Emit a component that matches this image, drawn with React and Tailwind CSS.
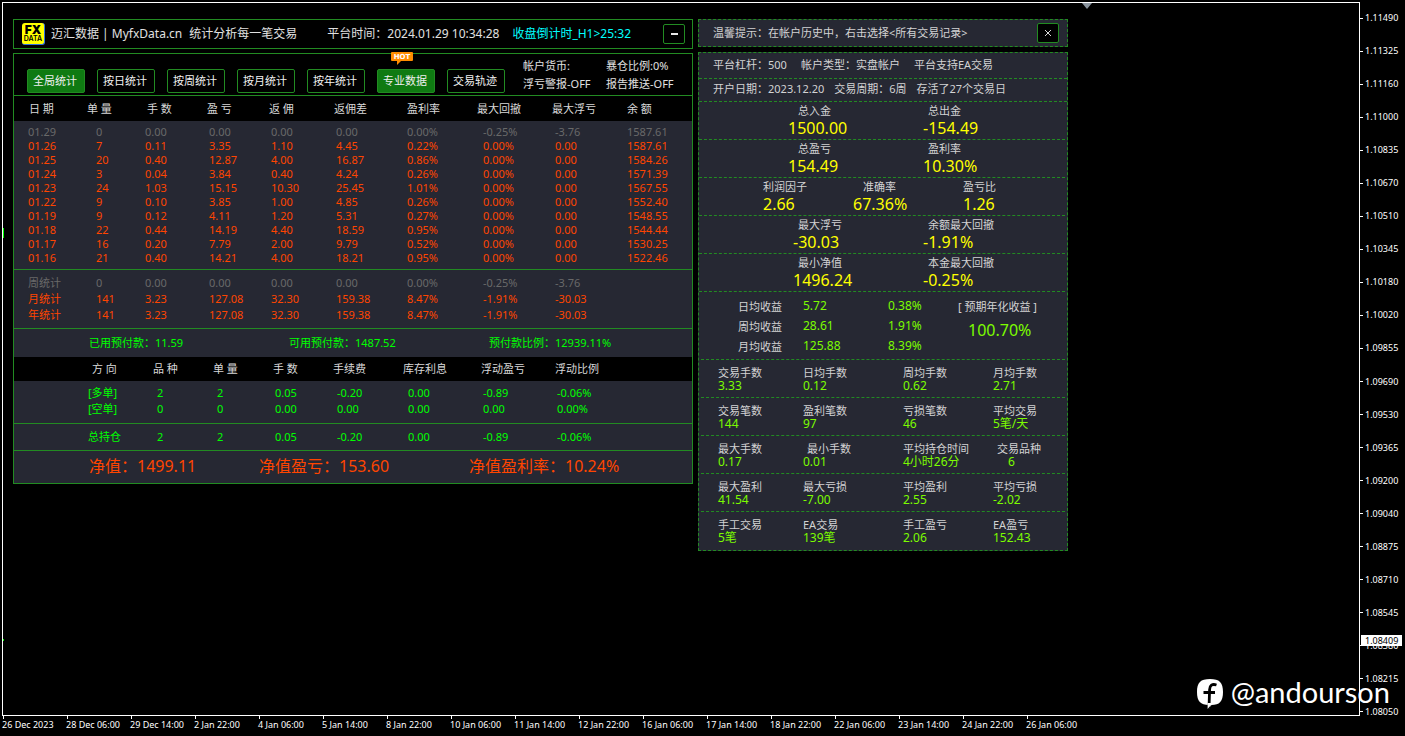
import React from 'react';

const FONT = "font-['Noto_Sans','Noto_Sans_CJK_SC',sans-serif]";

const tabs = [
  { label: '全局统计', active: true },
  { label: '按日统计' },
  { label: '按周统计' },
  { label: '按月统计' },
  { label: '按年统计' },
  { label: '专业数据', active: true, hot: true },
  { label: '交易轨迹' },
];

const dayCols = [
  { head: '日 期', w: 'w-[73px]', th: 'pl-[15px]', td: 'pl-[14px]' },
  { head: '单 量', w: 'w-[58px]', th: '', td: 'pl-[9px]' },
  { head: '手 数', w: 'w-[62px]', th: 'pl-[2px]', td: '' },
  { head: '盈 亏', w: 'w-[62px]', th: '', td: 'pl-[2px]' },
  { head: '返 佣', w: 'w-[65px]', th: '', td: 'pl-[2px]' },
  { head: '返佣差', w: 'w-[73px]', th: '', td: 'pl-[2px]' },
  { head: '盈利率', w: 'w-[70px]', th: '', td: '' },
  { head: '最大回撤', w: 'w-[75px]', th: '', td: 'pl-[6px]' },
  { head: '最大浮亏', w: 'w-[75px]', th: '', td: 'pl-[3px]' },
  { head: '余 额', w: '', th: '', td: '' },
];

const dayRows = [
  ['01.29', '0', '0.00', '0.00', '0.00', '0.00', '0.00%', '-0.25%', '-3.76', '1587.61'],
  ['01.26', '7', '0.11', '3.35', '1.10', '4.45', '0.22%', '0.00%', '0.00', '1587.61'],
  ['01.25', '20', '0.40', '12.87', '4.00', '16.87', '0.86%', '0.00%', '0.00', '1584.26'],
  ['01.24', '3', '0.04', '3.84', '0.40', '4.24', '0.26%', '0.00%', '0.00', '1571.39'],
  ['01.23', '24', '1.03', '15.15', '10.30', '25.45', '1.01%', '0.00%', '0.00', '1567.55'],
  ['01.22', '9', '0.10', '3.85', '1.00', '4.85', '0.26%', '0.00%', '0.00', '1552.40'],
  ['01.19', '9', '0.12', '4.11', '1.20', '5.31', '0.27%', '0.00%', '0.00', '1548.55'],
  ['01.18', '22', '0.44', '14.19', '4.40', '18.59', '0.95%', '0.00%', '0.00', '1544.44'],
  ['01.17', '16', '0.20', '7.79', '2.00', '9.79', '0.52%', '0.00%', '0.00', '1530.25'],
  ['01.16', '21', '0.40', '14.21', '4.00', '18.21', '0.95%', '0.00%', '0.00', '1522.46'],
];

const sumRows = [
  ['周统计', '0', '0.00', '0.00', '0.00', '0.00', '0.00%', '-0.25%', '-3.76', ''],
  ['月统计', '141', '3.23', '127.08', '32.30', '159.38', '8.47%', '-1.91%', '-30.03', ''],
  ['年统计', '141', '3.23', '127.08', '32.30', '159.38', '8.47%', '-1.91%', '-30.03', ''],
];

const posCols = [
  { head: '方 向', w: 'w-[139px]', th: 'pl-[78px]', td: 'pl-[74px]' },
  { head: '品 种', w: 'w-[60px]', th: '', td: 'pl-[4px]' },
  { head: '单 量', w: 'w-[60px]', th: '', td: 'pl-[4px]' },
  { head: '手 数', w: 'w-[60px]', th: '', td: 'pl-[2px]' },
  { head: '手续费', w: 'w-[70px]', th: '', td: 'pl-[4px]' },
  { head: '库存利息', w: 'w-[78px]', th: '', td: 'pl-[5px]' },
  { head: '浮动盈亏', w: 'w-[74px]', th: '', td: 'pl-[2px]' },
  { head: '浮动比例', w: '', th: '', td: 'pl-[2px]' },
];

const posRows = [
  ['[多单]', '2', '2', '0.05', '-0.20', '0.00', '-0.89', '-0.06%'],
  ['[空单]', '0', '0', '0.00', '0.00', '0.00', '0.00', '0.00%'],
];
const posTotal = [['总持仓', '2', '2', '0.05', '-0.20', '0.00', '-0.89', '-0.06%']];

const two = ['w-[135px]', 'flex-1'];
const three = ['w-[90px]', 'w-[110px]', 'flex-1'];
const bigRows = [
  { pad: 'pl-[89px]', cols: two, items: [['总入金', '1500.00', 'pl-[10px]', ''], ['总出金', '-154.49', 'pl-[5px]', '']] },
  { pad: 'pl-[89px]', cols: two, items: [['总盈亏', '154.49', 'pl-[10px]', ''], ['盈利率', '10.30%', 'pl-[5px]', '']] },
  { pad: 'pl-[64px]', cols: three, items: [['利润因子', '2.66', '', ''], ['准确率', '67.36%', 'pl-[10px]', ''], ['盈亏比', '1.26', '', '']] },
  { pad: 'pl-[89px]', cols: two, items: [['最大浮亏', '-30.03', 'pl-[10px]', 'pl-[5px]'], ['余额最大回撤', '-1.91%', 'pl-[5px]', '']] },
  { pad: 'pl-[89px]', cols: two, items: [['最小净值', '1496.24', 'pl-[10px]', 'pl-[5px]'], ['本金最大回撤', '-0.25%', 'pl-[5px]', '']] },
];

const incomeRows = [
  ['日均收益', '5.72', '0.38%'],
  ['周均收益', '28.61', '1.91%'],
  ['月均收益', '125.88', '8.39%'],
];

const quadRows = [
  [['交易手数', '3.33'], ['日均手数', '0.12'], ['周均手数', '0.62'], ['月均手数', '2.71']],
  [['交易笔数', '144'], ['盈利笔数', '97'], ['亏损笔数', '46'], ['平均交易', '5笔/天']],
  [['最大手数', '0.17'], ['最小手数', '0.01', 'pl-[4px]', ''], ['平均持仓时间', '4小时26分'], ['交易品种', '6', 'pl-[4px]', 'pl-[15px]']],
  [['最大盈利', '41.54'], ['最大亏损', '-7.00'], ['平均盈利', '2.55'], ['平均亏损', '-2.02']],
  [['手工交易', '5笔'], ['EA交易', '139笔'], ['手工盈亏', '2.06'], ['EA盈亏', '152.43']],
];

const prices = [
  '1.11490', '1.11325', '1.11160', '1.11000', '1.10835', '1.10670', '1.10510', '1.10345',
  '1.10180', '1.10020', '1.09855', '1.09690', '1.09530', '1.09365', '1.09200', '1.09040',
  '1.08875', '1.08710', '1.08545', '1.08380', '1.08215', '1.08050',
];

const times = [
  '26 Dec 2023', '28 Dec 06:00', '29 Dec 14:00', '2 Jan 22:00', '4 Jan 06:00', '5 Jan 14:00',
  '8 Jan 22:00', '10 Jan 06:00', '11 Jan 14:00', '12 Jan 22:00', '16 Jan 06:00', '17 Jan 14:00',
  '18 Jan 22:00', '22 Jan 06:00', '23 Jan 14:00', '24 Jan 22:00', '26 Jan 06:00',
];

function Logo() {
  return (
    <div className="flex h-[22px] w-[23px] flex-col items-center justify-center rounded-[3px] border-r border-b border-[#2f6fe0] bg-[#ffff00] text-black">
      <span className="font-[Inter,sans-serif] text-[12px] leading-[11px] font-black">FX</span>
      <span className="font-[Inter,sans-serif] text-[7px] leading-[8px] font-semibold">DATA</span>
    </div>
  );
}

function HotBadge() {
  return (
    <span className="absolute -top-[18px] left-[13px] block h-[13px] w-[22px]">
      <svg viewBox="0 0 22 13" className="absolute inset-0 h-full w-full" aria-hidden="true">
        <path d="M1 0h20a1 1 0 0 1 1 1v7a1 1 0 0 1-1 1H10l-4 4V9H1a1 1 0 0 1-1-1V1a1 1 0 0 1 1-1z" fill="#ff8c00" />
      </svg>
      <span className="relative block text-center font-['DejaVu_Sans',sans-serif] text-[7px] leading-[10px] font-bold text-white">HOT</span>
    </span>
  );
}

function Rows({ cols, rows, height, color }) {
  return rows.map((row) => (
    <tr key={row[0]} className={`${height} ${color(row)}`}>
      {row.map((cell, i) => (
        <td key={i} className={`p-0 ${cols[i].td}`}>{cell}</td>
      ))}
    </tr>
  ));
}

function Spacer({ height, span, line }) {
  return (
    <tr aria-hidden="true" className={`${height} ${line ? 'border-b border-[#228b22]' : ''}`}>
      <td colSpan={span} className="p-0" />
    </tr>
  );
}

function Head({ cols, height }) {
  return (
    <thead>
      <tr className={`${height} bg-black text-left text-[#d8d8d8]`}>
        {cols.map((c) => (
          <th key={c.head} scope="col" className={`p-0 font-normal ${c.w} ${c.th}`}>{c.head}</th>
        ))}
      </tr>
    </thead>
  );
}

function StatsPanel() {
  const dim = (row) => (row[1] === '0' ? 'text-[#696969]' : 'text-[#ff4500]');
  const lime = () => 'text-[#00ff00]';
  return (
    <section className="flex min-w-0 basis-[680px] flex-col gap-1">
      <header className="flex h-[30px] items-center border border-[#228b22] bg-black pr-[7px] pl-2 text-[12px] whitespace-pre text-[#e0e0e0]">
        <Logo />
        <h1 className="ml-[6px]">迈汇数据 | MyfxData.cn</h1>
        <span className="ml-[7px]">统计分析每一笔交易</span>
        <span className="ml-[30px]">平台时间：2024.01.29 10:34:28</span>
        <span className="ml-[13px] text-[#00ffff]">收盘倒计时_H1&gt;25:32</span>
        <button type="button" aria-label="最小化" className="ml-auto flex h-5 w-[22px] items-center justify-center rounded-[2px] border border-[#228b22] bg-black">
          <span className="block h-[2px] w-[7px] bg-[#e8e8e8]" />
        </button>
      </header>

      <div className="border border-[#228b22] bg-[#262833] text-[11px] leading-[14px]">
        <div className="flex h-[42px] border-b border-[#228b22] bg-black pl-[13px] text-[#e0e0e0]">
          <nav className="flex items-start gap-3 pt-[15px]">
            {tabs.map((t) => (
              <button
                key={t.label}
                type="button"
                className={`relative h-6 w-[58px] rounded-[2px] border border-[#228b22] pr-[2px] whitespace-nowrap text-[#f0f0f0] ${t.active ? 'bg-[#0f7a12]' : 'bg-black'}`}
              >
                {t.label}
                {t.hot && <HotBadge />}
              </button>
            ))}
          </nav>
          <div className="ml-[18px] grid grid-cols-[83px_auto] content-start pt-[3px] leading-[18px] whitespace-nowrap">
            <span>帐户货币:</span>
            <span>暴仓比例:0%</span>
            <span>浮亏警报-OFF</span>
            <span>报告推送-OFF</span>
          </div>
        </div>

        <table className="w-full table-fixed border-collapse whitespace-nowrap">
          <Head cols={dayCols} height="h-[25px]" />
          <tbody>
            <Spacer height="h-1" span={10} />
            <Rows cols={dayCols} rows={dayRows} height="h-[14px]" color={dim} />
            <Spacer height="h-1" span={10} line />
            <Spacer height="h-[6px]" span={10} />
            <Rows cols={dayCols} rows={sumRows} height="h-4" color={dim} />
            <Spacer height="h-[5px]" span={10} line />
          </tbody>
        </table>

        <div className="grid h-7 grid-cols-[200px_200px_auto] items-center pl-[75px] text-[#00ff00]">
          <span>已用预付款：11.59</span>
          <span>可用预付款：1487.52</span>
          <span>预付款比例：12939.11%</span>
        </div>

        <table className="w-full table-fixed border-collapse whitespace-nowrap">
          <Head cols={posCols} height="h-6" />
          <tbody>
            <Spacer height="h-1" span={8} />
            <Rows cols={posCols} rows={posRows} height="h-4" color={lime} />
            <Spacer height="h-[7px]" span={8} line />
            <Spacer height="h-[5px]" span={8} />
            <Rows cols={posCols} rows={posTotal} height="h-4" color={lime} />
            <Spacer height="h-[6px]" span={8} line />
          </tbody>
        </table>

        <div className="grid h-8 grid-cols-[170px_210px_auto] items-center pb-[2px] pl-[75px] text-[16px] whitespace-nowrap text-[#ff4500]">
          <span>净值：1499.11</span>
          <span>净值盈亏：153.60</span>
          <span>净值盈利率：10.24%</span>
        </div>
      </div>
    </section>
  );
}

function ProPanel() {
  const line = 'border-dashed border-[#228b22]';
  return (
    <section className="flex min-w-0 basis-[370px] flex-col gap-[5px] text-[11px] whitespace-nowrap text-[#d3d3d3]">
      <header className={`flex h-7 items-center border bg-[#262833] pr-2 pl-[14px] ${line}`}>
        <p>温馨提示：在帐户历史中，右击选择&lt;所有交易记录&gt;</p>
        <button type="button" aria-label="关闭" className="ml-auto flex h-5 w-[22px] items-center justify-center rounded-[2px] border border-[#228b22] bg-black">
          <svg viewBox="0 0 8 8" className="h-2 w-2" stroke="#d8d8d8" strokeWidth="1" aria-hidden="true">
            <path d="M1 1l6 6M7 1l-6 6" />
          </svg>
        </button>
      </header>

      <div className={`border bg-[#262833] ${line}`}>
        <div className={`flex h-[26px] items-center gap-[14px] border-b pl-[14px] ${line}`}>
          <span>平台杠杆：500</span>
          <span>帐户类型：实盘帐户</span>
          <span>平台支持EA交易</span>
        </div>
        <div className={`flex h-[23px] items-center gap-[10px] border-b pb-px pl-[14px] ${line}`}>
          <span>开户日期：2023.12.20</span>
          <span>交易周期：6周</span>
          <span>存活了27个交易日</span>
        </div>

        <div className="mx-[2px]">
          {bigRows.map((r) => (
            <dl key={r.items[0][0]} className={`-ml-[2px] flex h-[38px] border-b pt-[1px] ${line} ${r.pad}`}>
              {r.items.map(([label, value, lp, vp], i) => (
                <div key={label} className={r.cols[i]}>
                  <dt className={`leading-4 ${lp}`}>{label}</dt>
                  <dd className={`text-[16px] leading-[18px] text-[#ffff00] ${vp}`}>{value}</dd>
                </div>
              ))}
            </dl>
          ))}

          <div className={`flex h-[68px] border-b pt-1 pl-[37px] ${line}`}>
            <table className="h-[60px] w-[220px] table-fixed border-collapse">
              <tbody>
                {incomeRows.map(([label, a, b]) => (
                  <tr key={label} className="h-5">
                    <th scope="row" className="w-[65px] p-0 pt-[2px] text-left font-normal">{label}</th>
                    <td className="w-[85px] p-0 text-[12px] leading-5 text-[#7cfc00]">{a}</td>
                    <td className="p-0 text-[12px] leading-5 text-[#7cfc00]">{b}</td>
                  </tr>
                ))}
              </tbody>
            </table>
            <dl className="pt-[1px]">
              <dt className="leading-5">[ 预期年化收益 ]</dt>
              <dd className="pl-[10px] text-[16px] leading-[26px] text-[#7cfc00]">100.70%</dd>
            </dl>
          </div>

          {quadRows.map((row, n) => (
            <dl
              key={row[0][0]}
              className={`grid h-[38px] grid-cols-[85px_100px_90px_auto] content-start pt-[6px] pl-[17px] ${n < quadRows.length - 1 ? 'border-b' : ''} ${line}`}
            >
              {row.map(([label, value, lp = '', vp = '']) => (
                <div key={label}>
                  <dt className={`leading-[13px] ${lp}`}>{label}</dt>
                  <dd className={`text-[12px] leading-[13px] text-[#7cfc00] ${vp}`}>{value}</dd>
                </div>
              ))}
            </dl>
          ))}
        </div>
      </div>
    </section>
  );
}

function PriceAxis() {
  return (
    <aside className="relative flex w-[45px] shrink-0 flex-col justify-between pt-[12px] text-[9px] leading-[12px] text-white">
      {prices.map((p) => (
        <div key={p} className="flex h-2 items-center gap-[2px]">
          <span className="h-px w-[3px] bg-white" />
          <span>{p}</span>
        </div>
      ))}
      <div className="absolute top-[633px] left-px h-[11px] w-[41px] bg-white pl-1 leading-[11px] text-black">1.08409</div>
    </aside>
  );
}

function TimeAxis() {
  return (
    <footer className="flex h-5 pl-[2px] text-[9px] leading-[12px] whitespace-nowrap text-white">
      {times.map((t) => (
        <div key={t} className="w-16 shrink-0">
          <div className="ml-px h-[3px] w-px bg-white" />
          {t}
        </div>
      ))}
    </footer>
  );
}

function Watermark() {
  return (
    <div className="absolute right-[15px] bottom-[25px] flex items-center gap-2 text-white">
      <svg viewBox="0 0 26 30" className="h-[30px] w-[26px]" aria-hidden="true">
        <path d="M13 0C22.500 0 26 3.500 26 13S22.500 26 14.500 26L12 29.500V26C3.500 25.800 0 22.500 0 13S3.500 0 13 0z" fill="#fff" />
        <path d="M19.500 6C15 4.500 12.800 6.500 12.600 10.500L12 29M6.500 13.500h11.500" fill="none" stroke="#000" strokeWidth="2.800" />
        <path d="M10.600 24v6l3.400-4v-2z" fill="#fff" />
      </svg>
      <span className="pb-1 font-[Lato,sans-serif] text-[29px] leading-[30px]">@andourson</span>
    </div>
  );
}

export default function App() {
  return (
    <div className={`relative flex min-h-screen flex-col overflow-hidden bg-black ${FONT}`}>
      <div className="flex flex-1 pt-[2px] pl-[2px]">
        <main className="relative flex min-w-0 flex-1 items-start gap-[5px] border border-white pt-4 pl-[10px]">
          <StatsPanel />
          <ProPanel />
          <svg viewBox="0 0 10 6" className="absolute top-0 right-[267px] h-[6px] w-[10px]" aria-hidden="true">
            <path d="M0 0h10L5 6z" fill="#8a949e" />
          </svg>
          <span className="absolute top-[225px] left-0 h-[10px] w-px bg-[#00ff00]" />
          <span className="absolute top-[636px] left-0 h-[2px] w-px bg-[#00ff00]" />
        </main>
        <PriceAxis />
      </div>
      <TimeAxis />
      <Watermark />
    </div>
  );
}
